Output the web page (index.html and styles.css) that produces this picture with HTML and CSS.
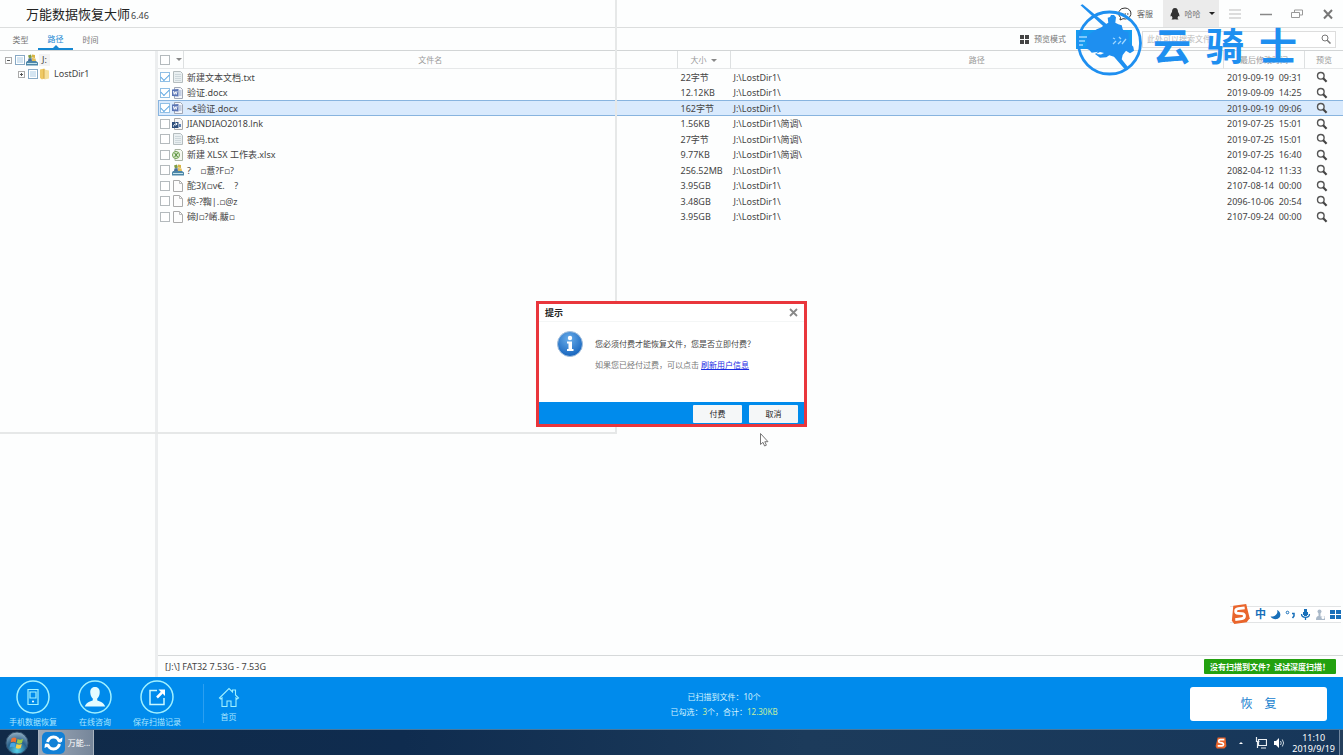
FILE: index.html
```html
<!DOCTYPE html>
<html lang="zh-CN">
<head>
<meta charset="utf-8">
<title>万能数据恢复大师</title>
<link rel="stylesheet" href="styles.css">
</head>
<body>
<svg class="defs" aria-hidden="true">
  <defs>
    <symbol id="i-search" viewBox="0 0 12 12"><circle cx="4.8" cy="4.8" r="3.3" fill="#fff" fill-opacity=".5" stroke="#555" stroke-width="1.4"/><path d="M7.2 7.2 10.6 10.8" stroke="#444" stroke-width="2.1"/></symbol>
    <symbol id="i-txt" viewBox="0 0 12 12"><path d="M1.5.5h7l2 2v9h-9z" fill="#e9eff1" stroke="#b4bcbe"/><path d="M3 3.5h6M3 5.5h6M3 7.5h6M3 9.5h6" stroke="#cdd7db"/></symbol>
    <symbol id="i-blank" viewBox="0 0 12 12"><path d="M1.5.5h6l3 3v8h-9z" fill="#fdfdfd" stroke="#aaa"/><path d="M7.5.5v3h3" fill="none" stroke="#bbb"/></symbol>
    <symbol id="i-doc" viewBox="0 0 12 12"><path d="M2.5.5h6l2 2v9h-8z" fill="#f4f6fb" stroke="#a0a7b5"/><path d="M7 4h2.500M7 6h2.500M7 8h2.500" stroke="#8fa3c7"/><path d="M0 2.500 6.500 2v7.500L0 9z" fill="#5a74b4"/><path d="m1.300 4 .9 3.400 1-2.800 1 2.800.9-3.400" fill="none" stroke="#fff" stroke-width=".9"/></symbol>
    <symbol id="i-xls" viewBox="0 0 12 12"><path d="M3 .5h5.500l2 2v9H3z" fill="#f5f8f1" stroke="#a9b3a2"/><circle cx="4" cy="6" r="3.500" fill="#e8f2dc" stroke="#6d9f4c"/><path d="m2.600 4 3 4m0-4-3 4" stroke="#4f8a35" stroke-width="1.100"/></symbol>
    <symbol id="i-lnk" viewBox="0 0 12 12"><path d="M2.500.5h6l2 2v9h-8z" fill="#f7f7f7" stroke="#aaa"/><path d="M0 4h6.500v6H0z" fill="#2e4f7c"/><path d="M1.500 8.500C1.500 6.500 3 6 4.500 6M3.500 4.800 5.200 6 3.500 7.400" fill="none" stroke="#fff"/><path d="M7 6h2v3H7z" fill="#5f83b5"/></symbol>
    <symbol id="i-drive" viewBox="0 0 12 12"><path d="M1 7h9l2 1.500v3H0V8.500z" fill="#4c86a8"/><path d="M1 9.500h10" stroke="#c4e3ec"/><path d="M2 1.500 5 .5l1 3-3 1z" fill="#7f9b43"/><path d="m6 .5 3 .5v3L6 3.500z" fill="#d8b443"/><path d="m2.500 4.500 3-.5.5 3H2z" fill="#486f99"/><path d="m6 4 3.500.5L10 7H6z" fill="#e2bd58"/></symbol>
    <symbol id="i-folder" viewBox="0 0 12 12"><path d="m1 1.500 4.500-1V10L3 11.500 1 10z" fill="#eec963"/><path d="M5.500 1.500 10 2.500v8l-4.500 1z" fill="#f6e09b"/><path d="M5 1v10" stroke="#d4a53e"/></symbol>
    <symbol id="i-sogou" viewBox="0 0 20 20"><path d="M4.500 1h13L19 15.500 15.500 19H3L1 15.500z" fill="#e9652c"/><path d="M15.500 4.500H9C5.500 4.500 5 8.500 8.300 9.200l3.600.7c3.500.8 2.700 5-.6 5H4.500" fill="none" stroke="#fff" stroke-width="2.800"/></symbol>
  </defs>
</svg>

<div class="app">
  <header class="titlebar">
    <h1 class="title">万能数据恢复大师</h1>
    <span class="version">6.46</span>
    <div class="title-tools">
      <button class="service"><svg width="14" height="14" viewBox="0 0 14 14"><path d="M7 1a6 5.500 0 1 1-2 10.700L2 13l.5-2.500A6 5.500 0 0 1 7 1z" fill="#fff" stroke="#333"/><path d="M4 7h1.500M6.500 7H8M9 7h1.500" stroke="#333"/></svg>客服</button>
      <button class="user"><svg width="10" height="12" viewBox="0 0 10 12"><path d="M5 0C2.700 0 2 2 2 4 1 5.300.3 7 .6 8.500L1.800 8l.7 2-1 1.500h3L5 11l.5.500h3l-1-1.500.7-2 1.200.5C9.700 7 9 5.300 8 4 8 2 7.300 0 5 0z" fill="#333"/></svg>哈哈<i class="caret caret-dark"></i></button>
      <button class="win" aria-label="菜单"><svg width="14" height="12" viewBox="0 0 14 12"><path d="M1 2h12M1 6h12M1 10h12" stroke="#bbb"/></svg></button>
      <button class="win" aria-label="最小化"><svg width="14" height="12" viewBox="0 0 14 12"><path d="M1 6.500h12" stroke="#888" stroke-width="1.500"/></svg></button>
      <button class="win" aria-label="还原"><svg width="14" height="12" viewBox="0 0 14 12"><path d="M1.500 4.500h8v5h-8zM4.500 4V2h8v5H10" fill="none" stroke="#999"/></svg></button>
      <button class="win" aria-label="关闭"><svg width="14" height="12" viewBox="0 0 14 12"><path d="m3 2 8 8.500M11 2l-8 8.500" stroke="#777" stroke-width="2"/></svg></button>
    </div>
  </header>

  <nav class="toolbar">
    <div class="tabs">
      <button class="tab">类型</button>
      <button class="tab active">路径</button>
      <button class="tab">时间</button>
    </div>
    <div class="tools">
      <button class="mode"><svg width="9" height="9" viewBox="0 0 9 9"><path d="M0 0h4v4H0zM5 0h4v4H5zM0 5h4v4H0zM5 5h4v4H5z" fill="#444"/></svg>预览模式</button>
      <button class="sort" aria-label="视图"></button>
      <form class="search"><input type="text" aria-label="搜索" placeholder="此处可以搜索文件"><button type="button" aria-label="搜索"><svg width="10" height="10" viewBox="0 0 10 10"><circle cx="4" cy="4" r="3" fill="none" stroke="#777"/><path d="m6.200 6.200 3.300 3.300" stroke="#777" stroke-width="1.500"/></svg></button></form>
    </div>
  </nav>

  <main class="main">
    <aside class="tree">
      <div class="node"><button class="expander" aria-label="折叠"></button><input type="checkbox" class="tri" aria-label="J:"><svg class="ico"><use href="#i-drive"/></svg><span class="drive">J:</span></div>
      <div class="node child"><button class="expander plus" aria-label="展开"></button><input type="checkbox" class="tri" aria-label="LostDir1"><svg class="ico"><use href="#i-folder"/></svg><span>LostDir1</span></div>
    </aside>
    <section class="files">
      <table class="grid">
        <colgroup><col class="c-check"><col><col class="c-size"><col><col class="c-time"><col class="c-view"></colgroup>
        <thead><tr>
          <th><div class="pick head"><input type="checkbox" aria-label="全选"><i class="caret"></i></div></th>
          <th>文件名</th><th>大小 <i class="caret"></i></th><th>路径</th><th>最后修改时间</th><th>预览</th>
        </tr></thead>
        <tbody>
          <tr><td><div class="pick"><input type="checkbox" checked aria-label="选择"><svg class="ico"><use href="#i-txt"/></svg></div></td><td>新建文本文档.txt</td><td>22字节</td><td>J:\LostDir1\</td><td>2019-09-19  09:31</td><td><svg class="ico"><use href="#i-search"/></svg></td></tr>
          <tr><td><div class="pick"><input type="checkbox" checked aria-label="选择"><svg class="ico"><use href="#i-doc"/></svg></div></td><td>验证.docx</td><td>12.12KB</td><td>J:\LostDir1\</td><td>2019-09-09  14:25</td><td><svg class="ico"><use href="#i-search"/></svg></td></tr>
          <tr class="selected"><td><div class="pick"><input type="checkbox" checked aria-label="选择"><svg class="ico"><use href="#i-doc"/></svg></div></td><td>~$验证.docx</td><td>162字节</td><td>J:\LostDir1\</td><td>2019-09-19  09:06</td><td><svg class="ico"><use href="#i-search"/></svg></td></tr>
          <tr><td><div class="pick"><input type="checkbox" aria-label="选择"><svg class="ico"><use href="#i-lnk"/></svg></div></td><td>JIANDIAO2018.lnk</td><td>1.56KB</td><td>J:\LostDir1\简调\</td><td>2019-07-25  15:01</td><td><svg class="ico"><use href="#i-search"/></svg></td></tr>
          <tr><td><div class="pick"><input type="checkbox" aria-label="选择"><svg class="ico"><use href="#i-txt"/></svg></div></td><td>密码.txt</td><td>27字节</td><td>J:\LostDir1\简调\</td><td>2019-07-25  15:01</td><td><svg class="ico"><use href="#i-search"/></svg></td></tr>
          <tr><td><div class="pick"><input type="checkbox" aria-label="选择"><svg class="ico"><use href="#i-xls"/></svg></div></td><td>新建 XLSX 工作表.xlsx</td><td>9.77KB</td><td>J:\LostDir1\简调\</td><td>2019-07-25  16:40</td><td><svg class="ico"><use href="#i-search"/></svg></td></tr>
          <tr><td><div class="pick"><input type="checkbox" aria-label="选择"><svg class="ico"><use href="#i-drive"/></svg></div></td><td>?    ▫薏?F▫?</td><td>256.52MB</td><td>J:\LostDir1\</td><td>2082-04-12  11:33</td><td><svg class="ico"><use href="#i-search"/></svg></td></tr>
          <tr><td><div class="pick"><input type="checkbox" aria-label="选择"><svg class="ico"><use href="#i-blank"/></svg></div></td><td>酡3)(▫v€.    ?</td><td>3.95GB</td><td>J:\LostDir1\</td><td>2107-08-14  00:00</td><td><svg class="ico"><use href="#i-search"/></svg></td></tr>
          <tr><td><div class="pick"><input type="checkbox" aria-label="选择"><svg class="ico"><use href="#i-blank"/></svg></div></td><td>烬-?鞫|.▫@z</td><td>3.48GB</td><td>J:\LostDir1\</td><td>2096-10-06  20:54</td><td><svg class="ico"><use href="#i-search"/></svg></td></tr>
          <tr><td><div class="pick"><input type="checkbox" aria-label="选择"><svg class="ico"><use href="#i-blank"/></svg></div></td><td>碲J▫?崤.黻▫</td><td>3.95GB</td><td>J:\LostDir1\</td><td>2107-09-24  00:00</td><td><svg class="ico"><use href="#i-search"/></svg></td></tr>
        </tbody>
      </table>
      <div class="status"><span>[J:\] FAT32 7.53G - 7.53G</span><button class="deep">没有扫描到文件？试试深度扫描！</button></div>
    </section>
  </main>

  <footer class="actions">
    <div class="shortcuts">
      <button class="short"><svg width="34" height="34" viewBox="0 0 34 34"><circle cx="17" cy="17" r="16" fill="none" stroke="#a0f1ff" stroke-width="1.500"/><path d="M12 9.500h10v15H12zM14 12h6v6h-6z" fill="none" stroke="#a0f1ff" stroke-width="1.200"/><circle cx="17" cy="21.500" r="1" fill="#fff"/></svg>手机数据恢复</button>
      <button class="short"><svg width="34" height="34" viewBox="0 0 34 34"><circle cx="17" cy="17" r="16" fill="none" stroke="#a0f1ff" stroke-width="1.500"/><path d="M17 7c-3.500 0-5 2.500-4.700 6 .2 3 1.500 4.500 2.500 5.500v1.700c-1.500 1.300-6.500 1.500-8 6.300h20.400c-1.500-4.800-6.500-5-8-6.300v-1.700c1-1 2.300-2.500 2.500-5.500C22 9.500 20.500 7 17 7z" fill="#e4fcff"/></svg>在线咨询</button>
      <button class="short"><svg width="34" height="34" viewBox="0 0 34 34"><circle cx="17" cy="17" r="16" fill="none" stroke="#a0f1ff" stroke-width="1.500"/><path d="M17 10.500h-7v14h14V18" fill="none" stroke="#c9f8ff" stroke-width="1.500"/><path d="M18.500 9.500h6.500V16z" fill="#fff"/><path d="m17 17.500 5-5" stroke="#fff" stroke-width="2.500"/></svg>保存扫描记录</button>
      <button class="short home"><svg width="22" height="22" viewBox="0 0 22 22"><path d="m1.500 12 9.500-9.500 3.500 3.500V4h3v5l3 3-1.500 1-1-1v8.500h-5V15H9v5.500H4V12l-1.200 1z" fill="none" stroke="#a0f1ff" stroke-width="1.100"/></svg>首页</button>
    </div>
    <div class="summary"><p>已扫描到文件：10个</p><p>已勾选：<b>3</b>个，合计：<b>12.30KB</b></p></div>
    <button class="recover"><span>恢</span><span>复</span></button>
  </footer>

  <div class="guide"></div>

  <div class="overlay">
    <section class="dialog" role="dialog" aria-label="提示">
      <div class="dialog-head"><h2>提示</h2><button aria-label="关闭"><svg width="9" height="9" viewBox="0 0 9 9"><path d="m1 1 7 7M8 1 1 8" stroke="#888" stroke-width="1.800"/></svg></button></div>
      <div class="dialog-body">
        <svg width="28" height="28" viewBox="0 0 28 28"><defs><radialGradient id="g-info" cx=".45" cy=".3" r=".7"><stop offset="0" stop-color="#69adea"/><stop offset="1" stop-color="#1664bd"/></radialGradient></defs><circle cx="14" cy="14" r="12.500" fill="url(#g-info)" stroke="#a4bfdc"/><circle cx="14" cy="8" r="2.200" fill="#fff"/><path d="M11 11.500h5v7.500h1.500v2H11v-2h1.500v-5.500H11z" fill="#fff"/></svg>
        <div><p>您必须付费才能恢复文件，您是否立即付费？</p><p class="sub">如果您已经付过费，可以点击 <a href="#">刷新用户信息</a></p></div>
      </div>
      <div class="dialog-foot"><button>付费</button><button>取消</button></div>
    </section>
  </div>

  <svg class="cursor" width="9" height="14" viewBox="0 0 9 14"><path d="M.5.5v11L3 9.300l1.600 3.700 1.800-.8L4.800 8.700H8z" fill="#fff" stroke="#777"/></svg>

  <div class="ime">
    <svg class="ime-logo" width="20" height="20"><use href="#i-sogou"/></svg>
    <span class="zh">中</span>
    <svg width="11" height="11" viewBox="0 0 11 11"><path d="M7 1c1.500 3-1.500 7-6.500 6.500C3.500 12 11 10.500 10.300 5 10 3 8.500 1.500 7 1z" fill="#186fb9"/></svg>
    <svg width="11" height="11" viewBox="0 0 11 11"><circle cx="2.500" cy="3.500" r="1.300" fill="none" stroke="#186fb9"/><path d="M7 4.500h2v2.500L7.500 9" fill="none" stroke="#186fb9" stroke-width="1.500"/></svg>
    <svg width="11" height="11" viewBox="0 0 11 11"><path d="M4 0h3v7H4zM3 3h5v3H3z" fill="#186fb9"/><path d="M1.500 5c0 4.500 8 4.500 8 0M5.500 8v3" fill="none" stroke="#186fb9" stroke-width="1.300"/></svg>
    <svg width="11" height="11" viewBox="0 0 11 11"><circle cx="4.500" cy="2.500" r="2" fill="#aab9c9"/><path d="M3.500 4h2v3.500H10V11H1c0-3 1-4 2.500-4z" fill="#aab9c9"/><circle cx="8" cy="8.500" r="1.500" fill="#fff"/></svg>
    <svg width="11" height="11" viewBox="0 0 11 11"><path d="M0 1h5v4H0zM6 1h5v4H6zM0 6h5v4H0zM6 6h5v4H6z" fill="#186fb9"/></svg>
  </div>

  <div class="watermark">
    <svg width="70" height="76" viewBox="0 0 70 76">
      <circle cx="34.500" cy="41" r="31" fill="none" stroke="#1e8ff0" stroke-width="2.800"/>
      <path d="m5.500 3.300 2-1L32 22.500 29.700 25.500z" fill="#1e8ff0"/>
      <path d="M26 25.500 29.300 23l4-2.300-.6-5 2.300-.7 1-2h3l2 2.300-.7 5.400 3 1.600 3.400 1 1 4 2 2.400 3.600 0 .5 10 4.500 5 .7 4-4 2.600-4-2.600-3.300 4.300-1 4.300 6 7.400L50 67.500l-6.700-7.800-4.300-5-4.700-1.400-3 2-6.300.5-5-3.800 3.300-2.300-6.600 1-2.400-2.700-4.300-2 2-3-1-8 5-4 5.700-3.700z" fill="#1e8ff0"/>
      <path d="m21 52 4-2 4 1-3 1.500z" fill="#fff"/>
      <path d="M4 35h8M4 39h6M4 43h4M38 42l3-3m2 3 3-3m1 3 4-5M38 36l2 1m4-2 2 2" stroke="#9fd7ff" stroke-width="1.300"/>
    </svg>
    <div class="brand"><span>云</span><span>骑</span><span>士</span></div>
  </div>
</div>

<div class="taskbar">
  <button class="start" aria-label="开始"><svg width="24" height="24" viewBox="0 0 24 24"><defs><radialGradient id="g-orb" cx=".5" cy=".85" r=".9"><stop offset="0" stop-color="#55d3ea"/><stop offset=".5" stop-color="#28618c"/><stop offset="1" stop-color="#a7bdcb"/></radialGradient></defs><circle cx="12" cy="12" r="11" fill="url(#g-orb)" stroke="#31506c"/><path d="M6.500 7.500q3-2 5 0l-.8 4q-2.500-1.500-5 0z" fill="#ef7132"/><path d="M12.500 8q2.500 1.500 5.500 0l-1 4q-2.500 1.500-5.200 0z" fill="#a0ca45"/><path d="M5.500 12.500q2.500-1.500 5 0l-.8 4q-2.500-1.500-5 0z" fill="#46a5e2"/><path d="M11.500 13q2.500 1.500 5.300 0l-1 4q-2.500 1.500-5 0z" fill="#fad047"/></svg></button>
  <button class="task"><svg width="23" height="22" viewBox="0 0 23 22"><rect width="23" height="22" rx="5" fill="#1180d6"/><circle cx="11.500" cy="11" r="6" fill="none" stroke="#fff" stroke-width="3"/><path d="m15 8.500 5.500-3-.5 4.500zM8 13.500 2.500 16l.5-4.500z" fill="#fff"/><path d="m14 10.500 6.500 1.200M9 11.500l-6.500-1.200" stroke="#1180d6" stroke-width="1.500"/></svg>万能...</button>
  <div class="tray">
    <svg width="12" height="12"><use href="#i-sogou"/></svg>
    <i class="up"></i>
    <svg width="12" height="12" viewBox="0 0 12 12"><path d="M3.500 2.500h8v6h-8zM6 11h5M1.500 0v4.500h3M2.500 5v6" fill="none" stroke="#e9eef2" stroke-width="1.200"/></svg>
    <svg class="vol" width="12" height="12" viewBox="0 0 12 12"><path d="M1 4h2l3-3v10L3 8H1z" fill="#fff"/><path d="M7.500 4q1.500 2 0 4M9.300 2.500q2.600 3.500 0 7" fill="none" stroke="#ccd7df"/></svg>
    <time><span>11:10</span><span>2019/9/19</span></time>
    <button class="desktop" aria-label="显示桌面"></button>
  </div>
</div>
</body>
</html>
```
FILE: styles.css
```css
* { box-sizing: border-box; }
html, body { height: 100%; }
body {
  margin: 0;
  display: flex;
  flex-direction: column;
  background: #fdfefe;
  color: #444;
  font: 9px/14px "Noto Sans", "DejaVu Sans", "Noto Sans CJK SC", sans-serif;
  overflow: hidden;
}
h1, h2, p { margin: 0; font-weight: 400; }
button {
  margin: 0; padding: 0; border: 0;
  background: none; color: inherit;
  font: inherit;
  display: flex; align-items: center; justify-content: center;
}
svg { display: block; flex: none; }
.defs { position: absolute; width: 0; height: 0; }
.ico { width: 12px; height: 12px; }
.app { flex: 1; min-height: 0; display: flex; flex-direction: column; position: relative; }

.titlebar {
  display: flex; align-items: center;
  height: 28px; padding-left: 26px;
  border-bottom: 1px solid #dcdede;
}
.title { font-size: 13px; line-height: 18px; color: #222; }
.version { padding: 4px 0 0 1px; }
.title-tools { margin-left: auto; display: flex; align-self: stretch; font-size: 8px; color: #666; }
.service { gap: 5px; padding: 0 10px; }
.user { width: 56px; gap: 5px; padding-left: 2px; background: #ebebeb; color: #777; }
.user .caret { margin-left: 3px; }
.win { width: 31px; }
.caret { display: inline-block; border: 3px solid transparent; border-top-color: #888; border-bottom: 0; }
.caret-dark { border-top-color: #222; }

.toolbar { display: flex; justify-content: space-between; height: 23px; border-bottom: 1px solid #d2d5d6; font-size: 8px; color: #777; }
.tabs { display: flex; padding-left: 3px; }
.tab { width: 35px; padding-top: 2px; position: relative; }
.tab.active { color: #1688d2; border-bottom: 2px solid #1688d2; }
.tab.active::after { content: ""; position: absolute; bottom: 0; left: 15px; border: 3px solid transparent; border-bottom-color: #1688d2; border-top: 0; }
.tools { display: flex; align-items: center; gap: 10px; padding-right: 7px; }
.mode { gap: 5px; }
.sort { width: 56px; height: 19px; background: #169bf0; }
.search { display: flex; width: 194px; height: 17px; border: 1px solid #ddd; background: #fff; }
.search input { flex: 1; min-width: 0; border: 0; padding: 0 4px; background: none; font: inherit; outline: 0; }
.search input::placeholder { color: #bbb; }
.search button { width: 18px; }

.main { flex: 1; min-height: 0; display: flex; }
.tree { width: 158px; padding: 2px 0 0 5px; border-right: 3px solid #eceeef; }
.node { display: flex; align-items: center; height: 14px; gap: 1px; }
.node.child { padding-left: 13px; }
.node span { padding-left: 2px; }
.node .drive { background: #f3f3f3; padding: 0 3px; line-height: 12px; }
.expander { width: 7px; height: 7px; border: 1px solid #aaa; margin-right: 2px; position: relative; }
.expander::before { content: ""; width: 3px; height: 1px; background: #555; }
.expander.plus::after { content: ""; position: absolute; width: 1px; height: 3px; background: #555; }
input[type="checkbox"] {
  appearance: none; flex: none;
  width: 10px; height: 10px; margin: 0;
  border: 1px solid #b4babd; background: #fff;
  display: grid; place-items: center;
}
input[type="checkbox"]:checked { border-color: #91bfe5; }
input[type="checkbox"]:checked::after { content: ""; width: 7px; height: 4px; margin-top: -2px; border: solid #5ba5e2; border-width: 0 0 1px 1px; transform: rotate(-45deg); }
input.tri { border-color: #87a9c5; background: #d4e5f2; box-shadow: inset 0 0 0 1px #fff; }

.files { flex: 1; min-width: 0; display: flex; flex-direction: column; }
.grid { width: 100%; table-layout: fixed; border-collapse: separate; border-spacing: 0; }
.c-check { width: 26px; }
.c-size { width: 53px; }
.c-time { width: 81px; }
.c-view { width: 38px; }
th { height: 18px; padding: 0; font-size: 8px; line-height: 14px; font-weight: 400; color: #999; border-right: 1px solid #dde0e1; border-bottom: 1px solid #e6e8e9; }
th:last-child { border-right: 0; }
th .caret { vertical-align: middle; margin-left: 2px; }
td { height: 15px; padding: 0 3px; line-height: 13px; white-space: pre; vertical-align: middle; overflow: hidden; }
tbody tr:nth-child(odd) td { height: 16px; }
td:first-child { padding: 0; }
td:last-child { padding-left: 11px; }
.pick { display: flex; align-items: center; gap: 2px; padding-left: 2px; }
.pick.head { gap: 6px; }
.pick .caret { margin: 0; }
.selected td { background: #d9eafd; border: solid #88b4df; border-width: 1px 0; }
.selected td:first-child { border-left-width: 1px; }
.selected .pick { padding-left: 1px; }

.status { margin-top: auto; display: flex; align-items: center; justify-content: space-between; height: 22px; padding: 0 7px; border-top: 1px solid #d6d9da; }
.deep { height: 15px; padding: 0 6px; background: #23a10f; color: #fff; font-size: 8px; font-weight: 700; border-radius: 1px; }

.actions { display: flex; align-items: center; height: 53px; padding: 1px 16px 0 0; background: #008bec; border-bottom: 1px solid #47789d; color: #d5f3ff; }
.shortcuts { display: flex; align-self: stretch; padding-left: 2px; width: 258px; font-size: 8px; line-height: 12px; color: #a9e6ff; }
.short { flex-direction: column; width: 62px; gap: 2px; white-space: nowrap; }
.home { width: 50px; margin: 6px 0 6px 15px; gap: 3px; padding-top: 2px; border-left: 1px solid #2b9ff0; }
.summary { flex: 1; text-align: center; line-height: 15px; padding-top: 1px; font-size: 8px; }
.summary b { font-weight: 400; color: #c4eda0; }
.recover { width: 137px; height: 34px; gap: 12px; border-radius: 3px; background: #fff; color: #1681cf; font-size: 12px; }

.guide { position: absolute; left: 0; top: 0; width: 617px; height: 434px; border: solid #e6e8e8; border-width: 0 2px 2px 0; pointer-events: none; }

.overlay { position: absolute; inset: 0 0 2px; display: grid; place-items: center; }
.dialog { width: 271px; background: #fff; border: 3px solid #e9363c; font-size: 8px; }
.dialog-head { display: flex; align-items: center; justify-content: space-between; height: 18px; padding: 0 6px; border-bottom: 1px solid #f4f6f6; }
.dialog-head h2 { font-size: 9px; font-weight: 700; color: #222; }
.dialog-body { display: flex; gap: 11px; height: 80px; padding: 8px 17px; }
.dialog-body p { line-height: 14px; padding-top: 7px; white-space: nowrap; }
.dialog-body .sub { color: #777; }
.dialog-body a { color: #1c2ce4; }
.dialog-foot { display: flex; justify-content: flex-end; align-items: center; gap: 7px; height: 22px; padding: 1px 6px 0 0; background: #008bec; }
.dialog-foot button { width: 49px; height: 18px; background: #f5f7f8; color: #222; border-radius: 1px; }

.cursor { position: absolute; left: 760px; top: 433px; }
.ime { position: absolute; right: 2px; bottom: 106px; display: flex; align-items: center; gap: 4px; height: 20px; background: linear-gradient(#e2e4e5 1px, #fff 1px 16px, #e2e4e5 16px) 0 50% / 100% 17px no-repeat; }
.ime .zh { color: #186fb9; font-size: 11px; font-weight: 700; padding-left: 1px; }
.ime-logo { transform: rotate(-8deg); }

.watermark { position: absolute; right: 46px; top: 2px; display: flex; align-items: center; gap: 8px; color: #1e8ff0; font: 700 38px/38px "Noto Sans CJK SC", sans-serif; pointer-events: none; }
.brand { display: flex; gap: 15px; padding-top: 8px; }

.taskbar { display: flex; align-items: stretch; height: 25px; padding-left: 5px; background: linear-gradient(90deg, #102a48, #0f2c4f 30%, #1c3b5b 60%, #17375a); color: #fff; }
.start { width: 24px; margin-right: 9px; }
.task { width: 56px; gap: 3px; background: linear-gradient(90deg, #9da9b8, #76869a); border: 1px solid #a9b4c0; border-width: 0 1px; font-size: 8px; white-space: nowrap; }
.tray { margin-left: auto; display: flex; align-items: center; gap: 7px; }
.up { border: 2px solid transparent; border-bottom-color: #fff; border-top: 0; margin: 0 5px; }
.tray .vol { margin-left: -1px; }
.tray time { display: flex; flex-direction: column; align-items: center; line-height: 11px; }
.desktop { align-self: stretch; width: 4px; border-left: 1px solid #7388a0; background: #243f5c; margin-left: -3px; }
```
